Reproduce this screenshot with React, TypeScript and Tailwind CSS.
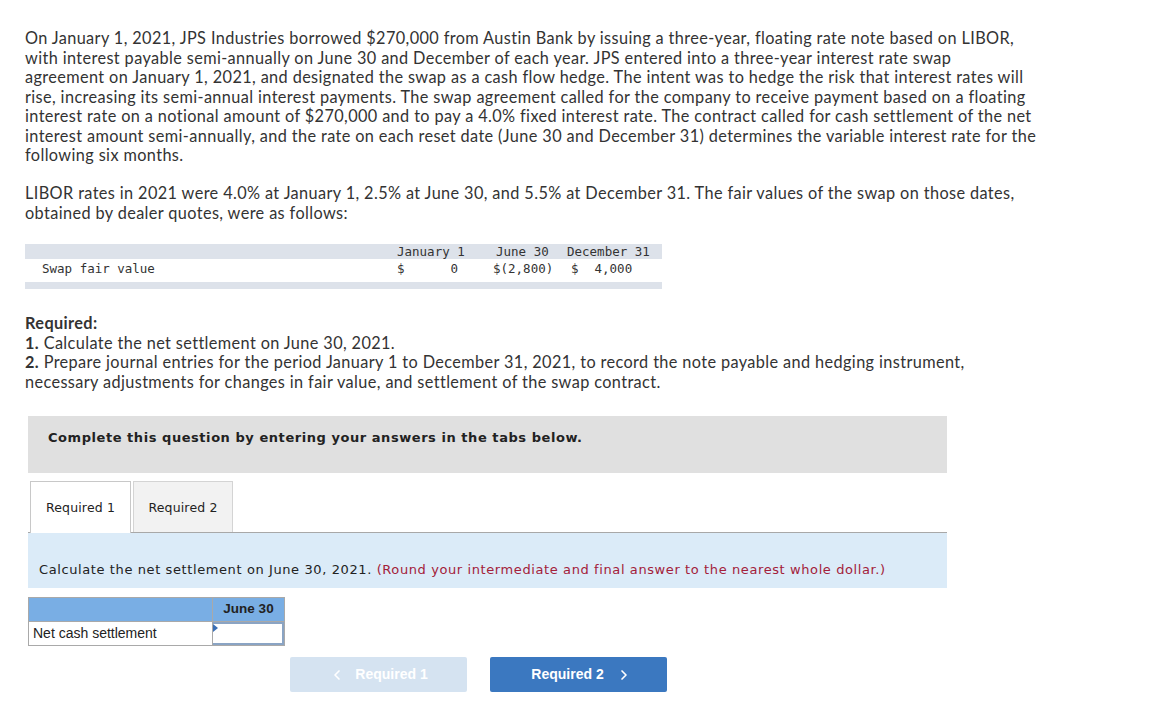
import { ChevronLeft, ChevronRight } from "lucide-react";

const body = "font-['Lato',sans-serif]";
const mono = "font-['DejaVu_Sans_Mono','Liberation_Mono',monospace]";
const tahoma = "font-['DejaVu_Sans','Verdana',sans-serif]";
const arial = "font-['Liberation_Sans','Arial',sans-serif]";

export default function App() {
  return (
    <div className="min-h-[725px] w-[1155px] bg-white pt-[28px] text-[#333]">
      <div className={`${body} whitespace-nowrap pl-[25px] text-[16.3px] leading-[19.5px] tracking-[0.38px]`}>
        <p>
          On January 1, 2021, JPS Industries borrowed $270,000 from Austin Bank by issuing a three-year, floating rate note based on LIBOR,
          <br />
          with interest payable semi-annually on June 30 and December of each year. JPS entered into a three-year interest rate swap
          <br />
          agreement on January 1, 2021, and designated the swap as a cash flow hedge. The intent was to hedge the risk that interest rates will
          <br />
          rise, increasing its semi-annual interest payments. The swap agreement called for the company to receive payment based on a floating
          <br />
          interest rate on a notional amount of $270,000 and to pay a 4.0% fixed interest rate. The contract called for cash settlement of the net
          <br />
          interest amount semi-annually, and the rate on each reset date (June 30 and December 31) determines the variable interest rate for the
          <br />
          following six months.
        </p>
        <p className="mt-[18.5px]">
          LIBOR rates in 2021 were 4.0% at January 1, 2.5% at June 30, and 5.5% at December 31. The fair values of the swap on those dates,
          <br />
          obtained by dealer quotes, were as follows:
        </p>
      </div>

      {/* swap fair value table */}
      <div className={`${mono} ml-[25px] mt-[22px] w-[637px] text-[12.5px] leading-[15px]`}>
        <div className="flex h-[15px] items-center bg-[#dde2ea]">
          <div className="w-[372px]" />
          <div className="w-[99px]">January 1</div>
          <div className="w-[71px]">June 30</div>
          <div>December 31</div>
        </div>
        <div className="flex h-[23px] items-center pb-[4px]">
          <div className="w-[372px] pl-[17px]">Swap fair value</div>
          <div className="w-[96px]">
            <div className="flex w-[61px] justify-between">
              <span>$</span>
              <span>0</span>
            </div>
          </div>
          <div className="w-[78px]">$(2,800)</div>
          <div className="flex gap-[16px]">
            <span>$</span>
            <span>4,000</span>
          </div>
        </div>
        <div className="h-[7px] bg-[#dde2ea]" />
      </div>

      <div className={`${body} mt-[24px] whitespace-nowrap pl-[25px] text-[16.3px] leading-[19.5px] tracking-[0.38px]`}>
        <p className="font-bold">Required:</p>
        <p>
          <span className="font-bold">1.</span> Calculate the net settlement on June 30, 2021.
        </p>
        <p>
          <span className="font-bold">2.</span> Prepare journal entries for the period January 1 to December 31, 2021, to record the note payable and hedging instrument,
          <br />
          necessary adjustments for changes in fair value, and settlement of the swap contract.
        </p>
      </div>

      <div className="ml-[28px] w-[919px]">
        <div className="mt-[25px] h-[57px] bg-[#e0e0e0] pl-[20px] pt-[13px]">
          <p className={`${tahoma} text-[13px] font-bold leading-[18px] tracking-[0.55px] text-[#222]`}>
            Complete this question by entering your answers in the tabs below.
          </p>
        </div>

        <div className="mt-[8px] flex items-end gap-[2px] border-b border-[#a8a8a8] pl-[2px]">
          <div className={`${tahoma} -mb-px flex h-[52px] w-[101px] items-center justify-center border border-b-0 border-[#c8c8c8] bg-white pt-[2px] text-[12.5px] tracking-[0.15px] text-[#222]`}>
            Required 1
          </div>
          <div className={`${tahoma} flex h-[51px] w-[100px] items-center justify-center border border-b-0 border-[#d4d4d4] bg-[#f2f2f2] pt-[2px] text-[12.5px] tracking-[0.15px] text-[#222]`}>
            Required 2
          </div>
        </div>

        <div className="h-[55px] bg-[#dbebf8] pl-[11px] pt-[28px]">
          <p className={`${tahoma} whitespace-nowrap text-[13px] leading-[18px] tracking-[0.6px] text-[#222]`}>
            Calculate the net settlement on June 30, 2021.{" "}
            <span className="text-[#a3213a]">(Round your intermediate and final answer to the nearest whole dollar.)</span>
          </p>
        </div>

        {/* answer grid */}
        <div className={`${arial} mt-[9px] w-[257px] text-[#222]`}>
          <div className="flex h-[24px] border border-b-0 border-[#a9a9a9] bg-[#79aee4] text-[13.5px]">
            <div className="w-[184px] border-r border-[#a9a9a9]" />
            <div className="flex flex-1 items-center justify-center font-bold">June 30</div>
          </div>
          <div className="flex h-[25px] border border-[#a9a9a9] bg-white text-[14px]">
            <div className="flex w-[184px] items-center border-r border-[#a9a9a9] pl-[4px]">Net cash settlement</div>
            <div className="relative flex-1 border-2 border-[#8aa4c4] border-l-0">
              <span className="absolute left-0 top-0 h-0 w-0 border-y-[4px] border-l-[5px] border-y-transparent border-l-[#3a6fb6]" />
            </div>
          </div>
        </div>

        <div className={`${arial} ml-[262px] mt-[11px] flex gap-[23px] text-[14px] font-bold text-white`}>
          <div className="flex h-[35px] w-[177px] items-center justify-center gap-[10px] rounded-[2px] bg-[#d5e3f1]">
            <ChevronLeft className="size-[16px]" strokeWidth={2.5} />
            <span>Required 1</span>
          </div>
          <div className="flex h-[35px] w-[177px] items-center justify-center gap-[12px] rounded-[2px] bg-[#3b78c0] pl-[6px]">
            <span>Required 2</span>
            <ChevronRight className="size-[16px]" strokeWidth={2.5} />
          </div>
        </div>
      </div>
    </div>
  );
}
